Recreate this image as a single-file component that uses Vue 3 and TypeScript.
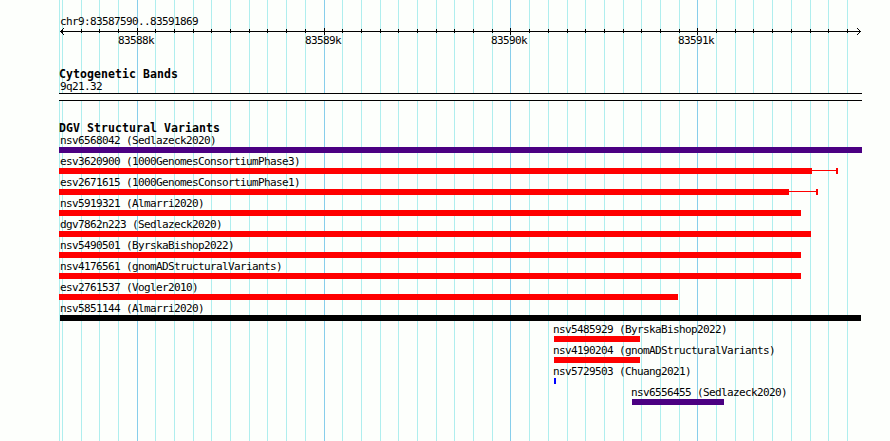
<script setup lang="ts">
interface Variant {
  label: string
  start: number
  end: number
  color: string
  labelStart: number
  whisker?: number
}

const gridMajor: number[] = [137, 324, 510, 697]
const gridMinor: number[] = [
  81, 99, 118, 155, 174, 193, 211, 230, 249, 267, 286, 305, 342, 361, 380, 398, 417, 436, 454,
  473, 492, 529, 548, 567, 585, 604, 623, 641, 660, 679, 716, 735, 753, 772, 791, 810, 828, 847,
]
const minorTicks = [62, ...gridMinor]
const minorLines = [59, ...minorTicks]
const axisLabels = [
  { x: 118, text: '83588k' },
  { x: 305, text: '83589k' },
  { x: 491, text: '83590k' },
  { x: 678, text: '83591k' },
]

const red = '#ff0000'
const indigo = '#4b0082'
const variants: Variant[] = [
  { label: 'nsv6568042 (Sedlazeck2020)', start: 59, end: 862, color: indigo, labelStart: 60 },
  { label: 'esv3620900 (1000GenomesConsortiumPhase3)', start: 59, end: 812, color: red, labelStart: 60, whisker: 838 },
  { label: 'esv2671615 (1000GenomesConsortiumPhase1)', start: 59, end: 789, color: red, labelStart: 60, whisker: 818 },
  { label: 'nsv5919321 (Almarri2020)', start: 59, end: 801, color: red, labelStart: 60 },
  { label: 'dgv7862n223 (Sedlazeck2020)', start: 59, end: 811, color: red, labelStart: 60 },
  { label: 'nsv5490501 (ByrskaBishop2022)', start: 59, end: 801, color: red, labelStart: 60 },
  { label: 'nsv4176561 (gnomADStructuralVariants)', start: 59, end: 801, color: red, labelStart: 60 },
  { label: 'esv2761537 (Vogler2010)', start: 59, end: 678, color: red, labelStart: 60 },
  { label: 'nsv5851144 (Almarri2020)', start: 60, end: 861, color: '#000000', labelStart: 60 },
  { label: 'nsv5485929 (ByrskaBishop2022)', start: 554, end: 640, color: red, labelStart: 553 },
  { label: 'nsv4190204 (gnomADStructuralVariants)', start: 554, end: 640, color: red, labelStart: 553 },
  { label: 'nsv5729503 (Chuang2021)', start: 554, end: 556, color: '#0000ff', labelStart: 553 },
  { label: 'nsv6556455 (Sedlazeck2020)', start: 632, end: 724, color: indigo, labelStart: 631 },
]
</script>

<template>
  <main class="browser">
    <svg class="grid" width="890" height="441" shape-rendering="crispEdges" aria-hidden="true">
      <rect v-for="x in minorLines" :key="x" :x="x" y="0" width="1" height="441" fill="#afeeee" />
      <rect v-for="x in gridMajor" :key="x" :x="x" y="0" width="1" height="441" fill="#87ceeb" />
    </svg>

    <header class="ruler">
      <div class="region text">chr9:83587590..83591869</div>
      <svg class="axis" width="890" height="23">
        <g shape-rendering="crispEdges">
          <rect x="60" y="6" width="801" height="1" />
          <rect v-for="x in minorTicks" :key="x" :x="x" y="4" width="1" height="4" />
          <rect v-for="x in gridMajor" :key="x" :x="x" y="3" width="1" height="7" />
          <path d="M61 5h1v1h-1zM62 4h1v1h-1zM63 3h1v1h-1zM61 7h1v1h-1zM62 8h1v1h-1zM63 9h1v1h-1z" />
          <path d="M859 5h1v1h-1zM858 4h1v1h-1zM857 3h1v1h-1zM859 7h1v1h-1zM858 8h1v1h-1zM857 9h1v1h-1z" />
        </g>
        <text v-for="l in axisLabels" :key="l.text" class="text" :x="l.x" y="19">{{ l.text }}</text>
      </svg>
    </header>

    <section class="bands">
      <h2 class="title">Cytogenetic Bands</h2>
      <div class="band-name text">9q21.32</div>
      <div class="band"></div>
    </section>

    <section class="variants">
      <h2 class="title">DGV Structural Variants</h2>
      <div v-for="v in variants" :key="v.label" class="variant">
        <div class="label text" :style="{ marginLeft: v.labelStart + 'px' }">{{ v.label }}</div>
        <div class="glyph" :style="{ marginLeft: v.start + 'px', color: v.color }">
          <span class="bar" :style="{ width: v.end - v.start + 'px' }"></span>
          <span v-if="v.whisker" class="whisker" :style="{ width: v.whisker - v.end + 'px' }"></span>
        </div>
      </div>
    </section>
  </main>
</template>

<style>
body {
  margin: 0;
  background: #fdfffc;
}
</style>

<style scoped>
.browser {
  position: relative;
  width: 890px;
  height: 441px;
  overflow: hidden;
  color: #000;
}
.grid {
  position: absolute;
  inset: 0;
  z-index: -1;
}
.text {
  font-family: "DejaVu Sans Mono", monospace;
  font-size: 11px;
  line-height: 12px;
  letter-spacing: -0.622px;
  white-space: pre;
}
.ruler {
  padding-top: 16px;
}
.region {
  height: 9px;
  margin-left: 60px;
}
.axis {
  display: block;
}
.title {
  height: 12px;
  margin: 0 0 0 59px;
  font: bold 11.5px/12px "DejaVu Sans Mono", monospace;
  letter-spacing: 0.077px;
  white-space: pre;
}
.bands {
  padding-top: 20px;
}
.band-name {
  height: 12px;
  margin: 1px 0 0 60px;
}
.band {
  box-sizing: border-box;
  width: 803px;
  height: 8px;
  margin-left: 59px;
  border: solid #000;
  border-width: 1px 0;
  background: #fdfffc;
}
.variants {
  padding-top: 21px;
}
.variants .title {
  margin-bottom: 1px;
}
.variant {
  height: 21px;
}
.label {
  height: 12px;
}
.glyph {
  display: flex;
  height: 6px;
}
.bar {
  background: currentColor;
}
.whisker {
  box-sizing: border-box;
  border-right: 2px solid;
  background: linear-gradient(currentColor, currentColor) 0 2px / 100% 1px no-repeat;
}
</style>
